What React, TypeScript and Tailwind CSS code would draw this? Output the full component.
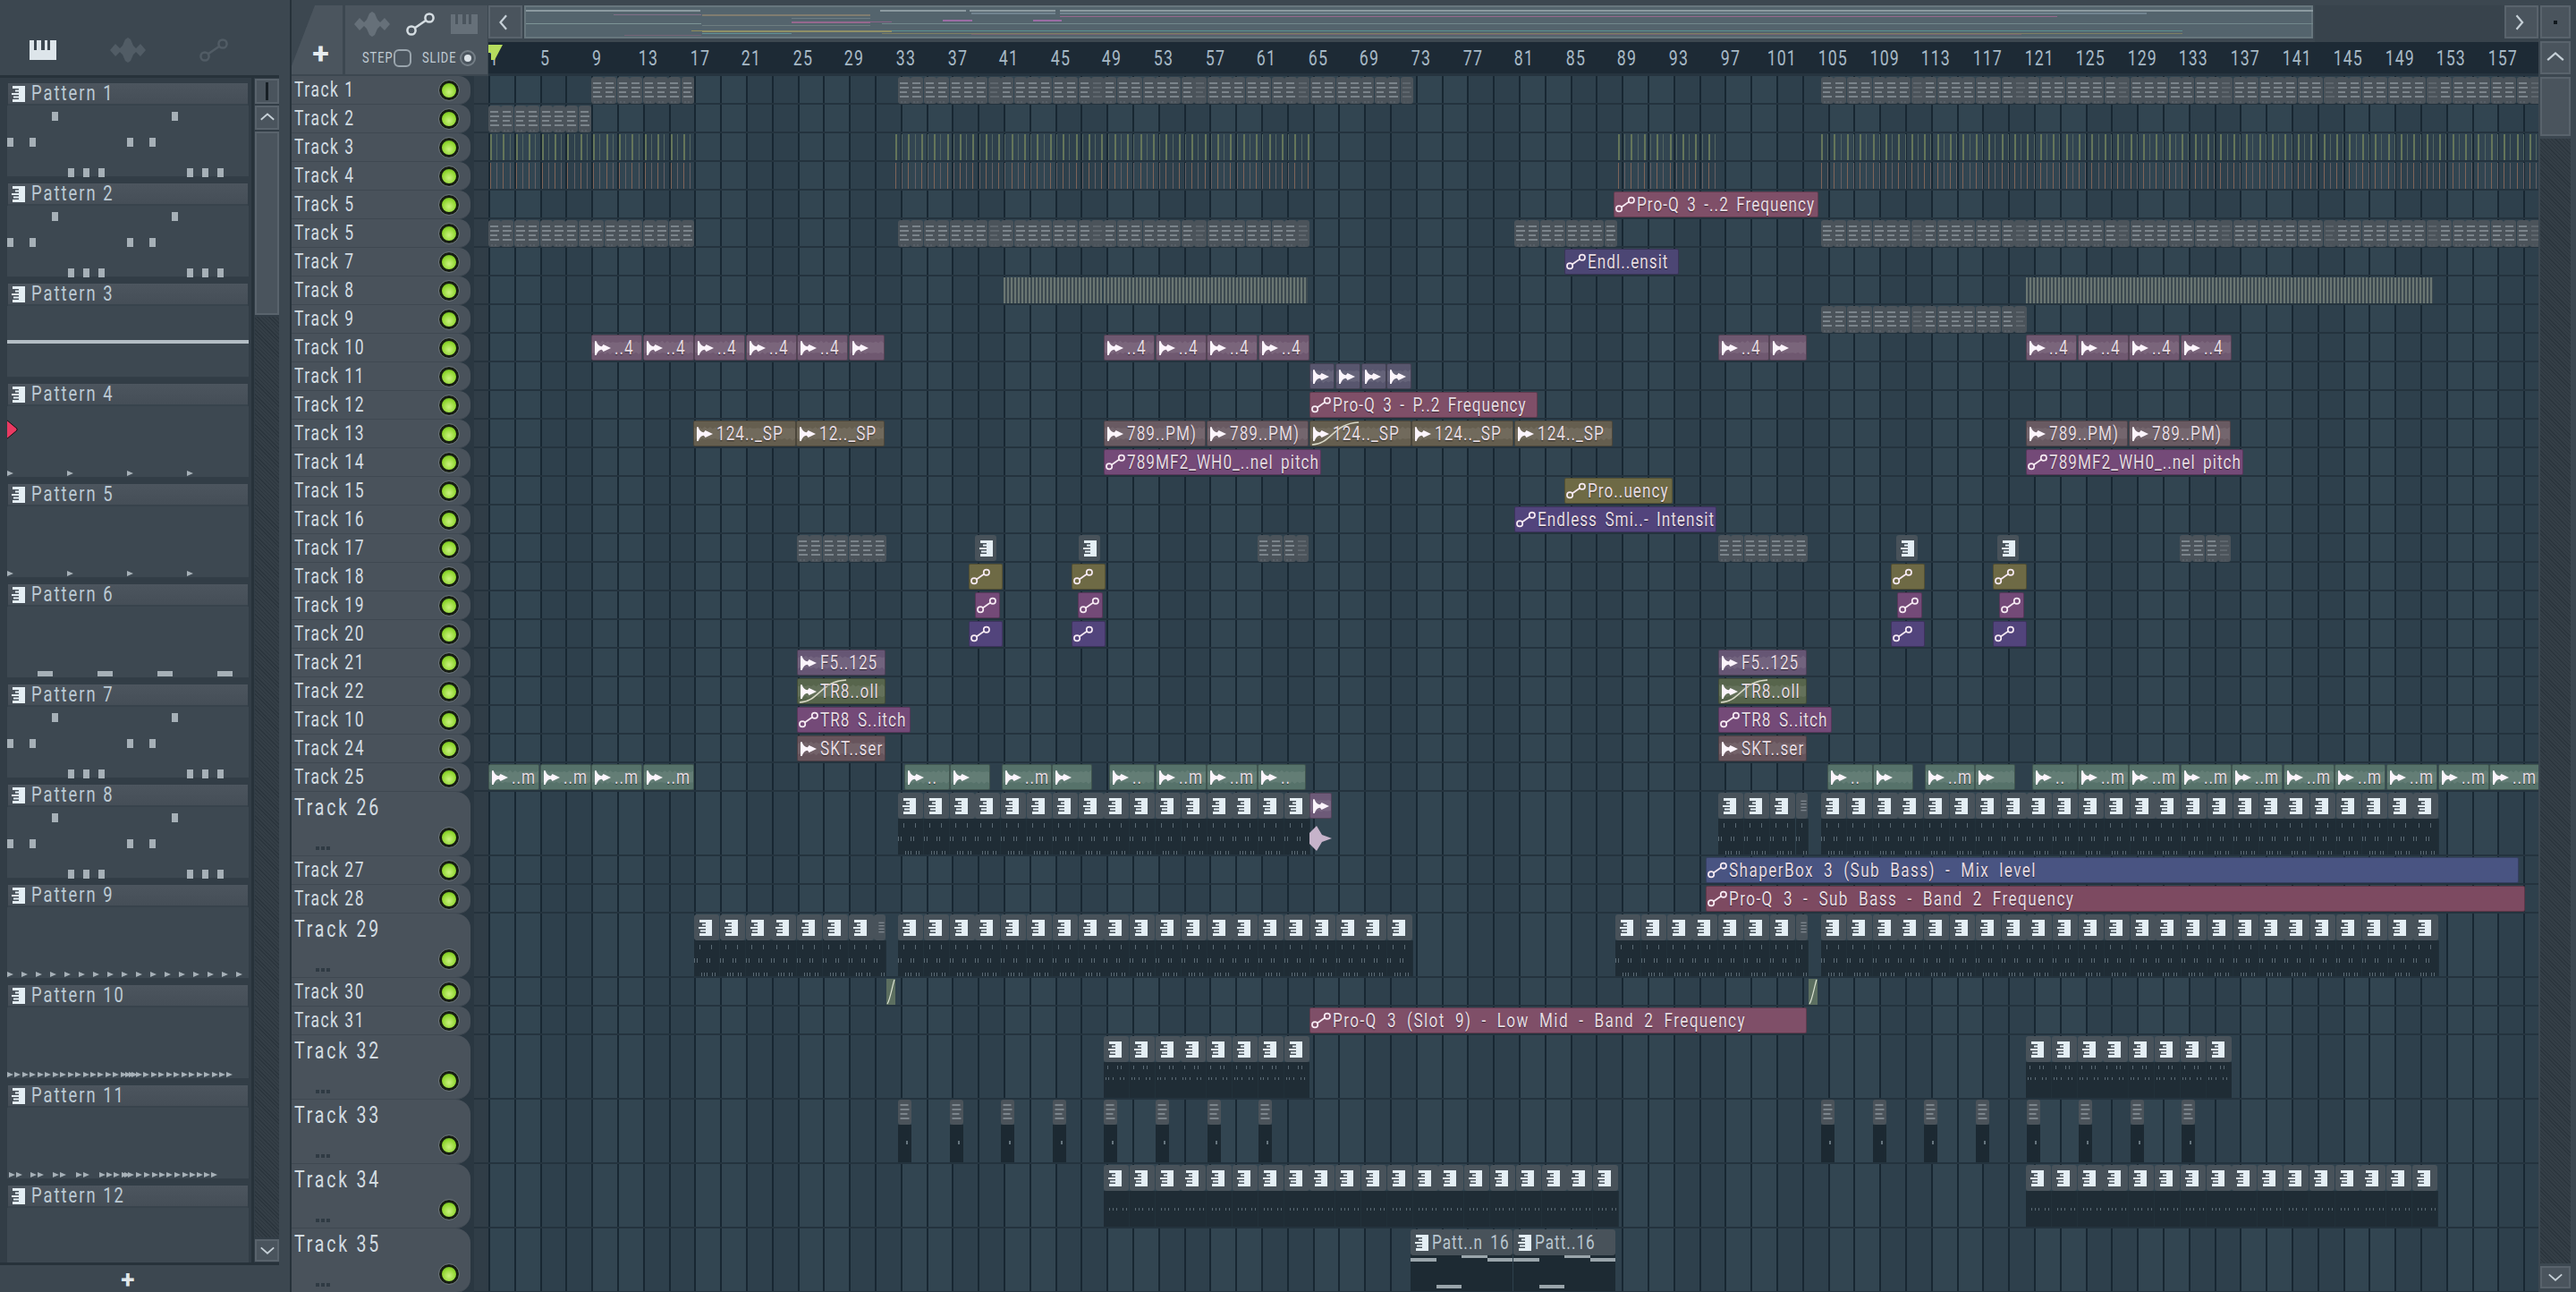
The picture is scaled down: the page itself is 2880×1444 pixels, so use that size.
import { ReactNode } from 'react';
import clsx from 'clsx';

type Clip = {
  kind: 'audio' | 'auto' | 'dim' | 'pat' | 'strip' | 'slant' | 'narrow';
  x: number;
  w: number;
  label?: string;
  color?: string;
  curve?: boolean;
  body?: 'a' | 'b' | 'c' | 'd';
  faded?: boolean;
  strip?: 'green' | 'red' | 'hatch';
  lavender?: boolean;
};

const range = (n: number) => Array.from({ length: n }, (_, i) => i);
const TOP = 546;

const MAUVE = '#6f5870';
const SLATE = '#58566e';
const TAN = '#655e4f';
const ROSE = '#695a62';
const TEAL = '#56726a';
const PINK = '#7f4f68';
const ORCHID = '#744a78';
const OLIVE = '#6e6a45';
const INDIGO = '#52447c';

const dims = (x: number, n: number, fadeEvery = 0, fadeLast = false): Clip[] =>
  range(n).map((i) => ({
    kind: 'dim',
    x: x + i * 14.4,
    w: 14,
    faded: (fadeLast && i === n - 1) || (fadeEvery > 0 && i % fadeEvery === fadeEvery - 1),
  }));
const audio = (x: number, w: number, label: string, color: string, curve = false): Clip => ({ kind: 'audio', x, w, label, color, curve });
const auto = (x: number, w: number, label: string, color: string): Clip => ({ kind: 'auto', x, w, label, color });
const pats = (x: number, n: number, body: 'a' | 'b' | 'c'): Clip[] =>
  range(n).map((i) => ({ kind: 'pat', x: x + i * 28.8, w: 28, body }));
const strip = (x: number, w: number, s: 'green' | 'red' | 'hatch'): Clip => ({ kind: 'strip', x, w, strip: s });
const fourBeat = (x: number, n: number, label: string, color: string) =>
  range(n).map((i) => audio(x + i * 57.6, 57, label, color));

const tealRun = (x: number): Clip[] => [
  audio(x + 7, 51, '..', TEAL),
  audio(x + 58, 45, '', TEAL),
  audio(x + 116, 56, '..m', TEAL),
  audio(x + 172, 45, '', TEAL),
  audio(x + 236, 51, '..', TEAL),
];

const hits = (xs: number[], w: number, color: string) => xs.map((x) => auto(x, w, '', color));

const tracks: { name: string; tall?: boolean; clips: Clip[] }[] = [
  { name: 'Track 1', clips: [...dims(661, 8), ...dims(1004, 40, 8), ...dims(2036, 56, 8)] },
  { name: 'Track 2', clips: dims(546, 8) },
  { name: 'Track 3', clips: [strip(548, 228, 'green'), strip(1001, 464, 'green'), strip(1809, 114, 'green'), strip(2036, 802, 'green')] },
  { name: 'Track 4', clips: [strip(548, 228, 'red'), strip(1001, 464, 'red'), strip(1809, 114, 'red'), strip(2036, 802, 'red')] },
  { name: 'Track 5', clips: [auto(1804, 229, 'Pro-Q 3 -..2 Frequency', PINK)] },
  { name: 'Track 5', clips: [...dims(546, 16), ...dims(1004, 32, 8), ...dims(1693, 8), ...dims(2036, 56, 8)] },
  { name: 'Track 7', clips: [auto(1749, 128, 'Endl..ensit', '#4c4674')] },
  { name: 'Track 8', clips: [strip(1122, 110, 'hatch'), strip(1234, 228, 'hatch'), strip(2265, 455, 'hatch')] },
  { name: 'Track 9', clips: dims(2036, 16, 8) },
  {
    name: 'Track 10',
    clips: [
      ...fourBeat(661, 5, '..4', MAUVE),
      audio(949, 40, '', MAUVE),
      ...fourBeat(1234, 4, '..4', MAUVE),
      audio(1921, 57, '..4', MAUVE),
      audio(1978, 42, '', MAUVE),
      ...fourBeat(2265, 4, '..4', MAUVE),
    ],
  },
  { name: 'Track 11', clips: range(4).map((i) => audio(1464 + i * 28.8, 28, '', SLATE)) },
  { name: 'Track 12', clips: [auto(1464, 255, 'Pro-Q 3 - P..2 Frequency', PINK)] },
  {
    name: 'Track 13',
    clips: [
      audio(775, 115, '124.._SP', TAN),
      audio(890, 99, '12.._SP', TAN),
      audio(1234, 114, '789..PM)', ROSE),
      audio(1349, 114, '789..PM)', ROSE),
      audio(1464, 114, '124.._SP', TAN, true),
      audio(1578, 114, '124.._SP', TAN),
      audio(1693, 110, '124.._SP', TAN),
      audio(2265, 114, '789..PM)', ROSE),
      audio(2380, 114, '789..PM)', ROSE),
    ],
  },
  { name: 'Track 14', clips: [auto(1234, 243, '789MF2_WH0_..nel pitch', ORCHID), auto(2265, 243, '789MF2_WH0_..nel pitch', ORCHID)] },
  { name: 'Track 15', clips: [auto(1749, 121, 'Pro..uency', OLIVE)] },
  { name: 'Track 16', clips: [auto(1693, 226, 'Endless Smi..- Intensit', INDIGO)] },
  {
    name: 'Track 17',
    clips: [
      ...dims(891, 7),
      ...[1090, 1206, 2120, 2233].map((x): Clip => ({ kind: 'pat', x, w: 24 })),
      ...dims(1406, 4, 0, true),
      ...dims(1921, 7),
      ...dims(2437, 4, 0, true),
    ],
  },
  { name: 'Track 18', clips: hits([1083, 1198, 2114, 2228], 38, OLIVE) },
  { name: 'Track 19', clips: hits([1090, 1205, 2121, 2235], 28, ORCHID) },
  { name: 'Track 20', clips: hits([1083, 1198, 2114, 2228], 38, INDIGO) },
  { name: 'Track 21', clips: [audio(891, 99, 'F5..125', '#665674'), audio(1921, 99, 'F5..125', '#665674')] },
  { name: 'Track 22', clips: [audio(891, 99, 'TR8..oll', '#57654c', true), audio(1921, 99, 'TR8..oll', '#57654c', true)] },
  { name: 'Track 10', clips: [auto(891, 127, 'TR8 S..itch', ORCHID), auto(1921, 127, 'TR8 S..itch', ORCHID)] },
  { name: 'Track 24', clips: [audio(891, 99, 'SKT..ser', '#67545c'), audio(1921, 99, 'SKT..ser', '#67545c')] },
  {
    name: 'Track 25',
    clips: [
      ...fourBeat(546, 4, '..m', TEAL),
      ...tealRun(1004),
      audio(1292, 57, '..m', TEAL),
      audio(1349, 57, '..m', TEAL),
      audio(1406, 54, '..', TEAL),
      ...tealRun(2036),
      audio(2323, 57, '..m', TEAL),
      ...fourBeat(2380, 8, '..m', TEAL),
    ],
  },
  {
    name: 'Track 26',
    tall: true,
    clips: [
      ...pats(1004, 16, 'a'),
      { kind: 'audio', x: 1464, w: 25, label: '', color: '#6d5a78', lavender: true },
      ...pats(1921, 3, 'a'),
      { kind: 'pat', x: 2008, w: 13, body: 'a', faded: true },
      ...pats(2036, 24, 'a'),
    ],
  },
  { name: 'Track 27', clips: [auto(1907, 909, 'ShaperBox 3 (Sub Bass) - Mix level', '#495482')] },
  { name: 'Track 28', clips: [auto(1907, 916, 'Pro-Q 3 - Sub Bass - Band 2 Frequency', '#7d4a61')] },
  {
    name: 'Track 29',
    tall: true,
    clips: [
      ...pats(776, 7, 'a'),
      { kind: 'pat', x: 977, w: 13, body: 'a', faded: true },
      ...pats(1004, 20, 'a'),
      ...pats(1806, 7, 'a'),
      { kind: 'pat', x: 2008, w: 13, body: 'a', faded: true },
      ...pats(2036, 24, 'a'),
    ],
  },
  { name: 'Track 30', clips: [{ kind: 'slant', x: 991, w: 10 }, { kind: 'slant', x: 2022, w: 10 }] },
  { name: 'Track 31', clips: [auto(1464, 556, 'Pro-Q 3 (Slot 9) - Low Mid - Band 2 Frequency', PINK)] },
  { name: 'Track 32', tall: true, clips: [...pats(1234, 8, 'b'), ...pats(2265, 8, 'b')] },
  {
    name: 'Track 33',
    tall: true,
    clips: [...range(8), ...range(8).map((i) => i + 100)].map(
      (i): Clip => ({ kind: 'narrow', x: i < 100 ? 1004 + i * 57.6 : 2036 + (i - 100) * 57.6, w: 15 }),
    ),
  },
  { name: 'Track 34', tall: true, clips: [...pats(1234, 20, 'c'), ...pats(2265, 16, 'c')] },
  {
    name: 'Track 35',
    tall: true,
    clips: [
      { kind: 'pat', x: 1577, w: 114, label: 'Patt..n 16', body: 'd' },
      { kind: 'pat', x: 1692, w: 114, label: 'Patt..16', body: 'd' },
    ],
  },
];

const drumNotes = [
  [50, 7], [184, 7],
  [0, 36], [25, 36], [134, 36], [159, 36],
  [68, 70], [85, 70], [102, 70], [201, 70], [218, 70], [235, 70],
];

const tri9 = range(18).map((i) => i * 16);
const tri10 = [...range(16).map((i) => i * 8.45), 132, 135.5, 139, ...range(13).map((i) => 144 + i * 8.45)];
const tri11 = [2, 10, 26, 34, 51, 59, 77, 85, 103, 111, 119, 128, 131, 135, 144, 153, 162, 170, 178, 187, 196, 204, 212, 220, 228];

const patterns: { name: string; notes?: 'drum' | 'line' | 'dash' | 'red'; tris?: number[] }[] = [
  { name: 'Pattern 1', notes: 'drum' },
  { name: 'Pattern 2', notes: 'drum' },
  { name: 'Pattern 3', notes: 'line' },
  { name: 'Pattern 4', notes: 'red', tris: [0, 67, 134, 201] },
  { name: 'Pattern 5', tris: [0, 67, 134, 201] },
  { name: 'Pattern 6', notes: 'dash' },
  { name: 'Pattern 7', notes: 'drum' },
  { name: 'Pattern 8', notes: 'drum' },
  { name: 'Pattern 9', tris: tri9 },
  { name: 'Pattern 10', tris: tri10 },
  { name: 'Pattern 11', tris: tri11 },
  { name: 'Pattern 12' },
];

const overview: [number, number, number, number, string][] = [
  [588, 783, 9, 2, '#8c9aa0'], [984, 1080, 9, 2, '#8c9aa0'], [1084, 1180, 9, 2, '#8c9aa0'], [1185, 2586, 9, 2, '#8c9aa0'],
  [686, 784, 14, 1, '#826f88'], [785, 973, 14, 2, '#807c70'], [1086, 1180, 12, 2, '#71838f'], [1185, 2400, 12, 2, '#71838f'],
  [1185, 2300, 16, 1, '#96688e'], [1054, 1087, 20, 2, '#9a6ca3'], [1155, 1187, 20, 2, '#9a6ca3'],
  [885, 973, 18, 1, '#6d7e84'], [885, 973, 22, 2, '#96688e'], [973, 997, 22, 1, '#8a6388'],
  [588, 784, 24, 1, '#7d9496'], [986, 2586, 24, 1, '#72888c'], [785, 973, 26, 1, '#6d7d81'],
  [773, 785, 32, 1, '#8f8c5c'], [785, 997, 32, 2, '#8f8f66'], [997, 2440, 32, 1, '#5b8f90'],
  [785, 885, 35, 1, '#639295'], [986, 2440, 35, 1, '#7c7e62'], [698, 784, 37, 1, '#756578'], [1086, 2260, 36, 1, '#756472'],
];

const txtVariants = {
  clip: 'scale-x-[0.78] text-[22px] tracking-[1.3px] [word-spacing:4px]',
  wide: 'scale-x-[0.78] text-[22px] tracking-[1.8px] [word-spacing:7px]',
  track: 'scale-x-[0.76] text-[23px] tracking-[2px]',
  tall: 'scale-x-[0.78] text-[25px] tracking-[3.6px]',
  pattern: 'scale-x-[0.8] text-[23px] tracking-[2.5px]',
  small: 'scale-x-[0.8] text-[16px] tracking-[1.2px]',
};

function Txt({ children, variant, className }: { children: ReactNode; variant: keyof typeof txtVariants; className?: string }) {
  return (
    <span className={clsx('inline-block origin-left whitespace-nowrap leading-none', txtVariants[variant], className)}>
      {children}
    </span>
  );
}

function PianoIcon({ className }: { className?: string }) {
  return (
    <svg viewBox="0 0 30 22" className={className} fill="currentColor">
      <path d="M0 0h5v11h3V0h2v0h3v11h4V0h3v11h3V0h7v22H0z" />
    </svg>
  );
}

function WaveIcon({ className }: { className?: string }) {
  return (
    <svg viewBox="0 0 40 28" className={className} fill="currentColor">
      <path d="M0 14 6 7l5 5 3-3 3-7 3-2 3 2 3 7 3 3 5-5 6 7-6 7-5-5-3 3-3 7-3 2-3-2-3-7-3-3-5 5z" />
    </svg>
  );
}

function AutoIcon({ className }: { className?: string }) {
  return (
    <svg viewBox="0 0 32 26" className={className} fill="none" stroke="currentColor" strokeWidth="2.5">
      <circle cx="6" cy="20" r="4.6" />
      <circle cx="26" cy="6" r="4.6" />
      <path d="M9.8 17.3 22.2 8.7" />
    </svg>
  );
}

function NoteIcon({ className }: { className?: string }) {
  return (
    <svg viewBox="0 0 16 18" className={className} fill="#e4eef4">
      <rect x="9" width="7" height="18" />
      <rect x="2" width="7" height="3" />
      <rect x="5" y="4.5" width="4" height="2" />
      <rect x="1" y="8" width="8" height="2" />
      <rect x="3" y="11.5" width="6" height="2" />
      <rect x="2" y="15" width="7" height="3" />
    </svg>
  );
}

function ClipIcon() {
  return (
    <svg viewBox="0 0 16 14" className="h-[16px] w-[18px] shrink-0" fill="#fbf4fb">
      <path d="M0 0h1.5Q3 5 7 5.5l1.5-2L16 7l-7.5 3.5L7 8.5Q3 9 1.5 14H0z" />
    </svg>
  );
}

function Chevron({ dir, className }: { dir: 'left' | 'right' | 'up' | 'down'; className?: string }) {
  const d = { left: 'M11 3 5 10l6 7', right: 'M5 3l6 7-6 7', up: 'M2 12l8-7 8 7', down: 'M2 6l8 7 8-7' }[dir];
  return (
    <svg viewBox="0 0 20 20" className={clsx('h-[18px] w-[18px]', className)} fill="none" stroke="currentColor" strokeWidth="2">
      <path d={d} />
    </svg>
  );
}

function Wave({ w, seed }: { w: number; seed: number }) {
  const steps = Math.max(6, Math.floor(w / 3));
  const at = (i: number, k: number) => 4 + 3 * Math.abs(Math.sin(i * 1.7 + seed + k));
  const top = range(steps + 1).map((i) => `${(i * w) / steps},${at(i, 0) + 2}`);
  const bottom = range(steps + 1).map((i) => `${w - (i * w) / steps},${29 - at(i, 2) - 2}`);
  return (
    <svg className="absolute inset-0 h-full w-full" viewBox={`0 0 ${w} 29`} preserveAspectRatio="none">
      <polygon points={[...top, ...bottom].join(' ')} fill="#ffffff" opacity="0.08" />
    </svg>
  );
}

function Curve() {
  return (
    <svg className="absolute left-0 top-0 h-full w-[56px]" viewBox="0 0 56 29" fill="none" stroke="#d8d8c6" strokeWidth="1.6">
      <path d="M0 28C22 28 26 2 56 1" />
    </svg>
  );
}

function PatBody({ w, body }: { w: number; body: 'a' | 'b' | 'c' }) {
  const rows =
    body === 'a'
      ? [[6, 5, 5], [19, 5, 5], [0, 20, 5], [3, 20, 5], [14, 20, 5], [17, 20, 5], [8, 36, 4], [11, 36, 4], [14, 36, 4], [20, 36, 4], [23, 36, 4]]
      : body === 'b'
        ? [[4, 4, 4], [15, 4, 4], [19, 4, 4], [2, 17, 3], [5, 17, 3], [10, 17, 3], [18, 17, 3], [22, 17, 3]]
        : [[6, 19, 3], [10, 19, 3], [14, 19, 3], [21, 19, 3], [25, 19, 3]];
  return (
    <svg className="absolute left-0 top-[30px] h-[40px]" width={w + 0.8} viewBox={`0 0 ${w + 0.8} 40`}>
      <rect width={w + 0.8} height="40" fill="#1f2c35" />
      {rows.filter((r) => r[0] < w).map(([x, y, h], i) => (
        <rect key={i} x={x} y={y} width="1" height={h} fill="#5b6a74" />
      ))}
    </svg>
  );
}

function StepBody() {
  const ys = [5, 35, 1, 5];
  return (
    <div className="absolute left-0 top-[28px] bottom-0 flex w-full bg-[#1d2a33]">
      {ys.map((y, i) => (
        <div key={i} className="relative flex-1">
          <div className="absolute h-[4px] w-full bg-[#9aa5ab]" style={{ top: y }} />
        </div>
      ))}
    </div>
  );
}

function ClipView({ clip, index }: { clip: Clip; index: number }) {
  const pos = { left: clip.x - TOP, width: clip.w };

  if (clip.kind === 'dim') {
    return (
      <div className="absolute top-[1px] h-[30px] rounded-[3px] bg-[#4b535a]" style={pos}>
        <svg viewBox="0 0 14 30" className={clsx('h-full w-full', clip.faded && 'opacity-40')}>
          <path d="M2 7h9M2 12h10M2 17h8M2 22h10" stroke="#8c959c" strokeWidth="1.6" />
          <path d="M4 27v2M8 27v2" stroke="#646d74" />
        </svg>
      </div>
    );
  }
  if (clip.kind === 'strip') {
    const look = {
      green: 'bg-[repeating-linear-gradient(90deg,#64755a_0,#64755a_2px,transparent_2px,transparent_7.2px,#536560_7.2px,#536560_8.2px,transparent_8.2px,transparent_14.4px)]',
      red: 'bg-[repeating-linear-gradient(90deg,#7d6459_0,#7d6459_1px,transparent_1px,transparent_7.2px,#635f63_7.2px,#635f63_8.2px,transparent_8.2px,transparent_14.4px)]',
      hatch: 'bg-[repeating-linear-gradient(90deg,#6a7672_0,#6a7672_2px,#3c4950_2px,#3c4950_4px)]',
    }[clip.strip!];
    return <div className={clsx('absolute top-[1px] h-[29px]', look)} style={pos} />;
  }
  if (clip.kind === 'slant') {
    return (
      <div className="absolute top-[1px] h-[29px] bg-[#5c6f60]" style={pos}>
        <svg viewBox="0 0 10 29" className="h-full w-full" fill="none" stroke="#dbe3d2" strokeWidth="1.2">
          <path d="M1 28C4 24 7 6 9 1" />
        </svg>
      </div>
    );
  }
  if (clip.kind === 'narrow') {
    return (
      <div className="absolute top-0 bottom-0" style={pos}>
        <div className="h-[28px] rounded-[3px] bg-[#4b535a]">
          <svg viewBox="0 0 14 28" className="h-full w-full">
            <path d="M2 6h9M2 11h10M2 16h8M2 21h10" stroke="#8c959c" strokeWidth="1.6" />
          </svg>
        </div>
        <div className="relative h-[42px] bg-[#1c2932]">
          <div className="absolute left-[9px] top-[18px] h-[4px] w-[2px] bg-[#66757e]" />
        </div>
      </div>
    );
  }
  if (clip.kind === 'pat') {
    return (
      <div className="absolute top-0 bottom-0" style={pos}>
        {clip.body && clip.body !== 'd' && <PatBody w={clip.w} body={clip.body} />}
        {clip.body === 'd' && <StepBody />}
        <div className="absolute left-0 right-0 top-[1px] flex h-[29px] items-center gap-[4px] rounded-[3px] bg-[#48525a] pl-[4px]">
          {clip.faded ? (
            <svg viewBox="0 0 13 29" className="h-full w-full">
              <path d="M2 7h9M2 12h9M2 17h9M2 22h9" stroke="#8f979e" strokeWidth="1.6" />
            </svg>
          ) : (
            <NoteIcon className="h-[18px] w-[16px] shrink-0" />
          )}
          {clip.label && <Txt variant="clip" className="text-[#b9c6cf]">{clip.label}</Txt>}
        </div>
      </div>
    );
  }

  return (
    <div
      className={clsx(
        'absolute top-[1px] flex h-[29px] items-center overflow-hidden rounded-[2px] border border-black/25 pl-[1px]',
        clip.kind === 'audio' ? 'gap-[4px]' : 'gap-[2px]',
      )}
      style={{ ...pos, backgroundColor: clip.color }}
    >
      {clip.kind === 'audio' && <Wave w={clip.w} seed={index} />}
      {clip.curve && <Curve />}
      {clip.kind === 'audio' ? (
        <span className="relative flex pl-[2px]">
          <ClipIcon />
        </span>
      ) : (
        <AutoIcon className="relative h-[19px] w-[22px] shrink-0 text-[#f6e9f2]" />
      )}
      {clip.label && (
        <Txt
          variant={clip.w > 300 ? 'wide' : 'clip'}
          className="relative text-[#e6dbe2] [text-shadow:0_1px_1px_rgba(0,0,0,0.55)]"
        >
          {clip.label}
        </Txt>
      )}
    </div>
  );
}

function Lavender() {
  return (
    <svg viewBox="0 0 25 28" className="absolute left-[918px] top-[38px] h-[28px] w-[25px]" fill="#c6b3ca">
      <path d="M0 8 8 0l6 10 11 4-11 4-6 10-8-8z" />
    </svg>
  );
}

function PatternRow({ name, notes, tris }: (typeof patterns)[number]) {
  return (
    <div className="mb-[7px] shrink-0">
      <div className="mx-[1px] flex h-[25px] items-center gap-[7px] border-b-2 border-[#38434c] bg-[linear-gradient(#4c555e,#454e57)] pl-[3px]">
        <NoteIcon className="h-[18px] w-[16px] shrink-0" />
        <Txt variant="pattern" className="text-[#bccad4]">{name}</Txt>
      </div>
      <div className="relative h-[80px] border-b border-[#333e47] bg-[#3d4851]">
        {notes === 'drum' &&
          drumNotes.map(([x, y], i) => (
            <div key={i} className="absolute h-[10px] w-[7px] bg-[#a6b0b7]" style={{ left: x, top: y }} />
          ))}
        {notes === 'line' && <div className="absolute inset-x-0 top-[38px] h-[4px] bg-[#b3bdc4]" />}
        {notes === 'dash' &&
          [34, 101, 168, 235].map((x) => (
            <div key={x} className="absolute bottom-[1px] h-[6px] w-[17px] bg-[#a6b0b7]" style={{ left: x }} />
          ))}
        {notes === 'red' && (
          <svg viewBox="0 0 14 24" className="absolute -left-[2px] top-[14px] h-[24px] w-[14px]">
            <path d="M1 1 13 11v2L1 23z" fill="#ea3a62" stroke="#111" strokeWidth="1" />
          </svg>
        )}
        {tris?.map((x, i) => (
          <div
            key={i}
            className="absolute bottom-[1px] h-0 w-0 border-y-[3.5px] border-l-[7px] border-y-transparent border-l-[#a6b0b7]"
            style={{ left: x }}
          />
        ))}
      </div>
    </div>
  );
}

function SquareBtn({ children, className }: { children?: ReactNode; className?: string }) {
  return (
    <div className={clsx('flex items-center justify-center border-2 border-[#59636c] bg-[#4a545d] text-[#c6d0d7]', className)}>
      {children}
    </div>
  );
}

function PatternPanel() {
  return (
    <div className="flex w-[322px] shrink-0 flex-col bg-[#3c4750]">
      <div className="flex h-[84px] shrink-0 items-center pl-[33px] pt-[28px]">
        <PianoIcon className="h-[22px] w-[30px] text-[#dde5ea]" />
        <WaveIcon className="ml-[60px] h-[28px] w-[40px] text-[#515c65]" />
        <AutoIcon className="ml-[60px] h-[26px] w-[32px] text-[#515c65]" />
      </div>
      <div className="flex h-[1330px] w-[312px] shrink-0 border-y-[3px] border-[#27323a] bg-[#323d46] pl-[8px]">
        <div className="flex h-full w-[270px] flex-col overflow-hidden bg-[#323d46] pt-[6px]">
          {patterns.map((p) => (
            <PatternRow key={p.name} {...p} />
          ))}
        </div>
        <div className="ml-[3px] flex w-[31px] flex-col gap-[2px] border-l-[3px] border-[#27323a] py-[1px] pl-[1px]">
          <SquareBtn className="h-[28px] w-[27px]">
            <div className="h-[20px] w-[3px] bg-[#171f25]" />
          </SquareBtn>
          <SquareBtn className="h-[27px] w-[27px] text-[#11181d]">
            <Chevron dir="up" />
          </SquareBtn>
          <SquareBtn className="h-[205px] w-[27px]" />
          <div className="flex-1 bg-[repeating-linear-gradient(45deg,#2b353d_0,#2b353d_1px,#343e46_1px,#343e46_3px)]" />
          <SquareBtn className="h-[25px] w-[27px] text-[#11181d]">
            <Chevron dir="down" />
          </SquareBtn>
        </div>
      </div>
      <div className="flex flex-1 items-center justify-center pr-[36px] pt-[3px] text-[28px] font-bold leading-none text-[#dfe6ea]">+</div>
    </div>
  );
}

function TrackHeader({ name, tall }: { name: string; tall?: boolean }) {
  return (
    <div className={clsx('flex shrink-0', tall ? 'h-[72px]' : 'h-[32px]')}>
      <div
        className={clsx(
          'relative w-[200px] border-b border-[#3f4851] bg-[#49525b] pl-[3px]',
          tall ? 'rounded-r-[16px]' : 'rounded-r-[13px]',
        )}
      >
        <Txt variant={tall ? 'tall' : 'track'} className={clsx('block text-[#d3dce2]', tall ? 'mt-[5px]' : 'mt-[4px]')}>
          {name}
        </Txt>
        {tall && (
          <div className="absolute bottom-[6px] left-[27px] flex gap-[2px]">
            <div className="h-[4px] w-[4px] bg-[#2f3a43]" />
            <div className="h-[4px] w-[4px] bg-[#2f3a43]" />
            <div className="h-[4px] w-[4px] bg-[#2f3a43]" />
          </div>
        )}
        <div
          className={clsx(
            'absolute left-[165px] h-[22px] w-[22px] rounded-full border-[3px] border-[#161d12] bg-[radial-gradient(circle_at_50%_62%,#c9f27e,#8fd62e_62%,#4f8f12)] outline outline-1 outline-[#6a7278]',
            tall ? 'bottom-[9px]' : 'top-[5px]',
          )}
        />
      </div>
      <div className="ml-[4px] w-[16px] border-b-2 border-[#25323c] bg-[#303d47]" />
    </div>
  );
}

function TopTools() {
  return (
    <div className="flex h-[85px] shrink-0 gap-[3px] pt-[6px]">
      <div className="flex h-[77px] w-[57px] items-end justify-center bg-[#4b555e] pb-[3px] pl-[8px] text-[34px] font-bold leading-[42px] text-[#e6ecf0] [clip-path:polygon(26px_0,100%_0,100%_100%,0_100%,0_88%)]">
        +
      </div>
      <div className="flex h-[77px] w-[159px] flex-col bg-[#4b555e] px-[9px]">
        <div className="flex h-[41px] shrink-0 items-center">
          <WaveIcon className="h-[28px] w-[42px] text-[#667079]" />
          <AutoIcon className="ml-[17px] h-[26px] w-[32px] text-[#d5dde2]" />
          <PianoIcon className="ml-[18px] h-[22px] w-[30px] text-[#667079]" />
        </div>
        <div className="flex h-[36px] items-center pl-[10px]">
          <Txt variant="small" className="w-[31px] text-[#c2cdd5]">STEP</Txt>
          <div className="ml-[4px] h-[20px] w-[20px] shrink-0 rounded-[6px] border-2 border-[#9aa5ad]" />
          <Txt variant="small" className="ml-[12px] w-[37px] text-[#c2cdd5]">SLIDE</Txt>
          <div className="ml-[5px] flex h-[18px] w-[18px] shrink-0 items-center justify-center rounded-full border-2 border-[#757f87]">
            <div className="h-[8px] w-[8px] rounded-full bg-[#dbe2e7]" />
          </div>
        </div>
      </div>
    </div>
  );
}

function Overview() {
  return (
    <div className="flex h-[47px] shrink-0 gap-[2px] pt-[6px]">
      <SquareBtn className="h-[37px] w-[38px]">
        <Chevron dir="left" className="h-[22px] w-[22px]" />
      </SquareBtn>
      <div className="relative h-[37px] w-[2000px] border-2 border-[#67767d] bg-[#54646d]">
        {overview.map(([a, b, y, h, color], i) => (
          <div key={i} className="absolute" style={{ left: a - 588, width: b - a, top: y - 6, height: h, backgroundColor: color }} />
        ))}
      </div>
      <div className="flex flex-1 justify-end bg-[#38434c]">
        <SquareBtn className="h-[37px] w-[38px]">
          <Chevron dir="right" className="h-[22px] w-[22px]" />
        </SquareBtn>
      </div>
    </div>
  );
}

function Ruler() {
  return (
    <div className="relative h-[38px] w-[2292px] shrink-0 border-b-[3px] border-[#26343f] bg-[#1d2a35]">
      <svg viewBox="0 0 16 18" className="absolute left-0 top-[3px] z-10 h-[18px] w-[16px]">
        <path d="M0 0h16L7 17H3V9H0z" fill="#b6dc5e" />
      </svg>
      {range(40).map((i) => (
        <div key={i} className="absolute top-[4px] w-[60px] text-center" style={{ left: i * 57.6 - 24 }}>
          <span className="inline-block scale-x-[0.74] text-[24px] leading-[28px] tracking-[1.4px] text-[#a7b9c6]">{i * 4 + 1}</span>
        </div>
      ))}
    </div>
  );
}

function Grid() {
  return (
    <div className="flex w-[2292px] flex-col overflow-hidden [background-image:repeating-linear-gradient(90deg,#182732_0,#182732_2px,transparent_2px,transparent_28.8px),repeating-linear-gradient(90deg,#324551_0,#324551_57.6px,#2e404c_57.6px,#2e404c_115.2px)]">
      {tracks.map((t, r) => (
        <div key={r} className={clsx('relative shrink-0 border-b-2 border-[#24333e]', t.tall ? 'h-[72px]' : 'h-[32px]')}>
          {t.clips.map((c, i) => (
            <ClipView key={i} clip={c} index={i + r} />
          ))}
          {t.name === 'Track 26' && <Lavender />}
        </div>
      ))}
    </div>
  );
}

function RightScroll() {
  return (
    <div className="flex h-[1444px] w-[42px] shrink-0 flex-col gap-[3px] pl-[2px] pr-[6px] pt-[6px]">
      <SquareBtn className="h-[37px] w-full shrink-0">
        <div className="h-[4px] w-[4px] bg-[#11181d]" />
      </SquareBtn>
      <SquareBtn className="h-[37px] w-full shrink-0 text-[#11181d]">
        <Chevron dir="up" className="h-[22px] w-[22px]" />
      </SquareBtn>
      <SquareBtn className="h-[66px] w-full shrink-0" />
      <div className="flex-1 bg-[repeating-linear-gradient(45deg,#2b353d_0,#2b353d_1px,#343e46_1px,#343e46_3px)]" />
      <SquareBtn className="mb-[4px] h-[25px] w-full shrink-0 text-[#11181d]">
        <Chevron dir="down" />
      </SquareBtn>
    </div>
  );
}

export default function App() {
  return (
    <div className="flex h-[1444px] w-[2880px] overflow-hidden bg-[#3c4750] [font-family:Roboto,sans-serif]">
      <PatternPanel />
      <div className="ml-[2px] flex h-full border-l-2 border-[#27323a]">
        <div className="flex w-[220px] shrink-0 flex-col bg-[#2a3741]">
          <div className="bg-[#3c4750]">
            <TopTools />
          </div>
          {tracks.map((t, i) => (
            <TrackHeader key={i} name={t.name} tall={t.tall} />
          ))}
        </div>
        <div className="flex flex-col">
          <Overview />
          <Ruler />
          <Grid />
        </div>
        <RightScroll />
      </div>
    </div>
  );
}
